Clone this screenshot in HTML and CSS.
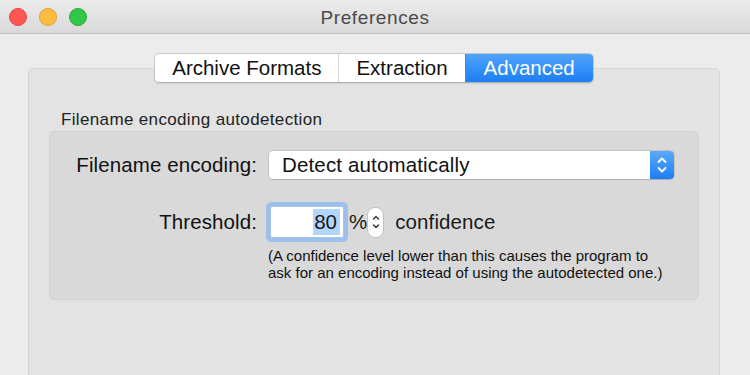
FILE: index.html
```html
<!DOCTYPE html>
<html lang="en">
<head>
    <meta charset="UTF-8">
    <meta name="viewport" content="width=device-width, initial-scale=1.0">
    <title>Preferences</title>
    <link rel="stylesheet" href="styles.css">
</head>
<body>
    <div class="titlebar">
        <div class="lights">
            <span class="light red"></span>
            <span class="light yellow"></span>
            <span class="light green"></span>
        </div>
        <div class="title">Preferences</div>
        <div></div>
    </div>

    <div class="window-body">
        <div class="tabs">
            <div class="tab">Archive Formats</div>
            <div class="tab">Extraction</div>
            <div class="tab active">Advanced</div>
        </div>

        <div class="panel">
            <div class="group-label">Filename encoding autodetection</div>
            <div class="group">
                <div class="form-label">Filename encoding:</div>
                <div class="select">
                    <span class="select-value">Detect automatically</span>
                    <span class="select-arrows">
                        <svg width="10" height="18" viewBox="0 0 10 18">
                            <path d="M1.5 6 L5 2.5 L8.5 6 M1.5 12 L5 15.5 L8.5 12" fill="none" stroke="#fff" stroke-width="1.8" stroke-linecap="round" stroke-linejoin="round"/>
                        </svg>
                    </span>
                </div>

                <div class="form-label">Threshold:</div>
                <div class="threshold">
                    <div class="number-field"><span class="selected">80</span></div>
                    <span class="percent">%</span>
                    <span class="stepper">
                        <svg width="8" height="20" viewBox="0 0 8 20">
                            <path d="M1.5 7 L4 4.5 L6.5 7 M1.5 13 L4 15.5 L6.5 13" fill="none" stroke="#333" stroke-width="1.4" stroke-linecap="round" stroke-linejoin="round"/>
                        </svg>
                    </span>
                    <span class="confidence">confidence</span>
                </div>

                <div class="help">(A confidence level lower than this causes the program to<br>ask for an encoding instead of using the autodetected one.)</div>
            </div>
        </div>
    </div>
</body>
</html>
```

FILE: styles.css
```css
body {
    margin: 0;
    background-color: #ececec;
    font-family: "Liberation Sans", Arial, sans-serif;
    color: #1a1a1a;
    overflow: hidden;
}
.titlebar {
    height: 33px;
    display: grid;
    grid-template-columns: 1fr auto 1fr;
    align-items: center;
    background: linear-gradient(#ebebeb, #d9d9d9);
    border-bottom: 1px solid #bdbdbd;
}
.lights {
    display: flex;
    gap: 12px;
    padding-left: 9px;
}
.light {
    width: 18px;
    height: 18px;
    border-radius: 50%;
    box-sizing: border-box;
}
.red {
    background-color: #fc5753;
    border: 1px solid #df4744;
}
.yellow {
    background-color: #fdbc40;
    border: 1px solid #dea236;
}
.green {
    background-color: #33c748;
    border: 1px solid #27aa35;
}
.title {
    font-size: 19px;
    letter-spacing: 0.6px;
    padding-top: 3px;
    color: #4a4a4a;
}
.window-body {
    padding: 19px 30px 0 28px;
}
.tabs {
    display: flex;
    width: max-content;
    margin: 0 auto -15px;
    height: 30px;
    position: relative;
    z-index: 1;
    background-color: #fff;
    border: 1px solid #c6c6c6;
    border-bottom-color: #b0b0b0;
    border-radius: 5px;
    box-sizing: border-box;
    box-shadow: 0 1px 1px rgba(0, 0, 0, 0.08);
    overflow: hidden;
}
.tab {
    display: flex;
    align-items: center;
    padding: 0 17px;
    font-size: 20.5px;
    color: #111;
    border-left: 1px solid #d9d9d9;
}
.tab:first-child {
    border-left: none;
}
.tab.active {
    padding: 0 18px;
    background: linear-gradient(#4fa3fb, #1d7ef3);
    color: #fff;
    border-left-color: #2f8cf5;
}
.panel {
    height: 300px;
    padding: 41px 20px 0 20px;
    background-color: #e3e3e3;
    border: 1px solid #d6d6d6;
    border-radius: 5px;
}
.group-label {
    font-size: 17px;
    letter-spacing: 0.35px;
    line-height: 20px;
    margin: 0 0 1px 12px;
    color: #222;
}
.group {
    display: grid;
    grid-template-columns: 207px 1fr;
    column-gap: 11px;
    row-gap: 26px;
    align-items: center;
    padding: 18px 23px 18px 0;
    background-color: #d9d9d9;
    border: 1px solid #d2d2d2;
    border-radius: 5px;
}
.form-label {
    text-align: right;
    font-size: 20.5px;
    letter-spacing: 0.1px;
    color: #111;
}
.select {
    height: 30px;
    display: flex;
    align-items: center;
    justify-content: space-between;
    background-color: #fff;
    border: 1px solid #c4c4c4;
    border-bottom-color: #aeaeae;
    border-radius: 5px;
    box-sizing: border-box;
    overflow: hidden;
}
.select-value {
    padding-left: 13px;
    font-size: 20.5px;
    letter-spacing: 0.15px;
    color: #111;
}
.select-arrows {
    width: 24px;
    height: 100%;
    display: flex;
    align-items: center;
    justify-content: center;
    background: linear-gradient(#5aaaf9, #1d7ef3);
}
.threshold {
    display: flex;
    align-items: center;
}
.number-field {
    width: 74px;
    height: 32px;
    margin-left: 2px;
    display: flex;
    align-items: center;
    justify-content: flex-end;
    padding-right: 3px;
    box-sizing: border-box;
    background-color: #fff;
    border: 1px solid #a6c3ea;
    box-shadow: 0 0 0 4px #9dbfec;
    border-radius: 2px;
    font-size: 20.5px;
}
.selected {
    background-color: #b4d6fd;
    padding: 1px 3px 1px 1px;
}
.percent {
    margin-left: 5px;
    font-size: 20.5px;
}
.stepper {
    width: 17px;
    height: 31px;
    margin-left: 0;
    display: flex;
    align-items: center;
    justify-content: center;
    background-color: #fff;
    border: 1px solid #c2c2c2;
    border-radius: 8px;
    box-sizing: border-box;
}
.confidence {
    margin-left: 11px;
    font-size: 20.5px;
    letter-spacing: 0.1px;
}
.help {
    grid-column: 2;
    margin-top: -16px;
    font-size: 15px;
    line-height: 16.5px;
    color: #111;
}
```
